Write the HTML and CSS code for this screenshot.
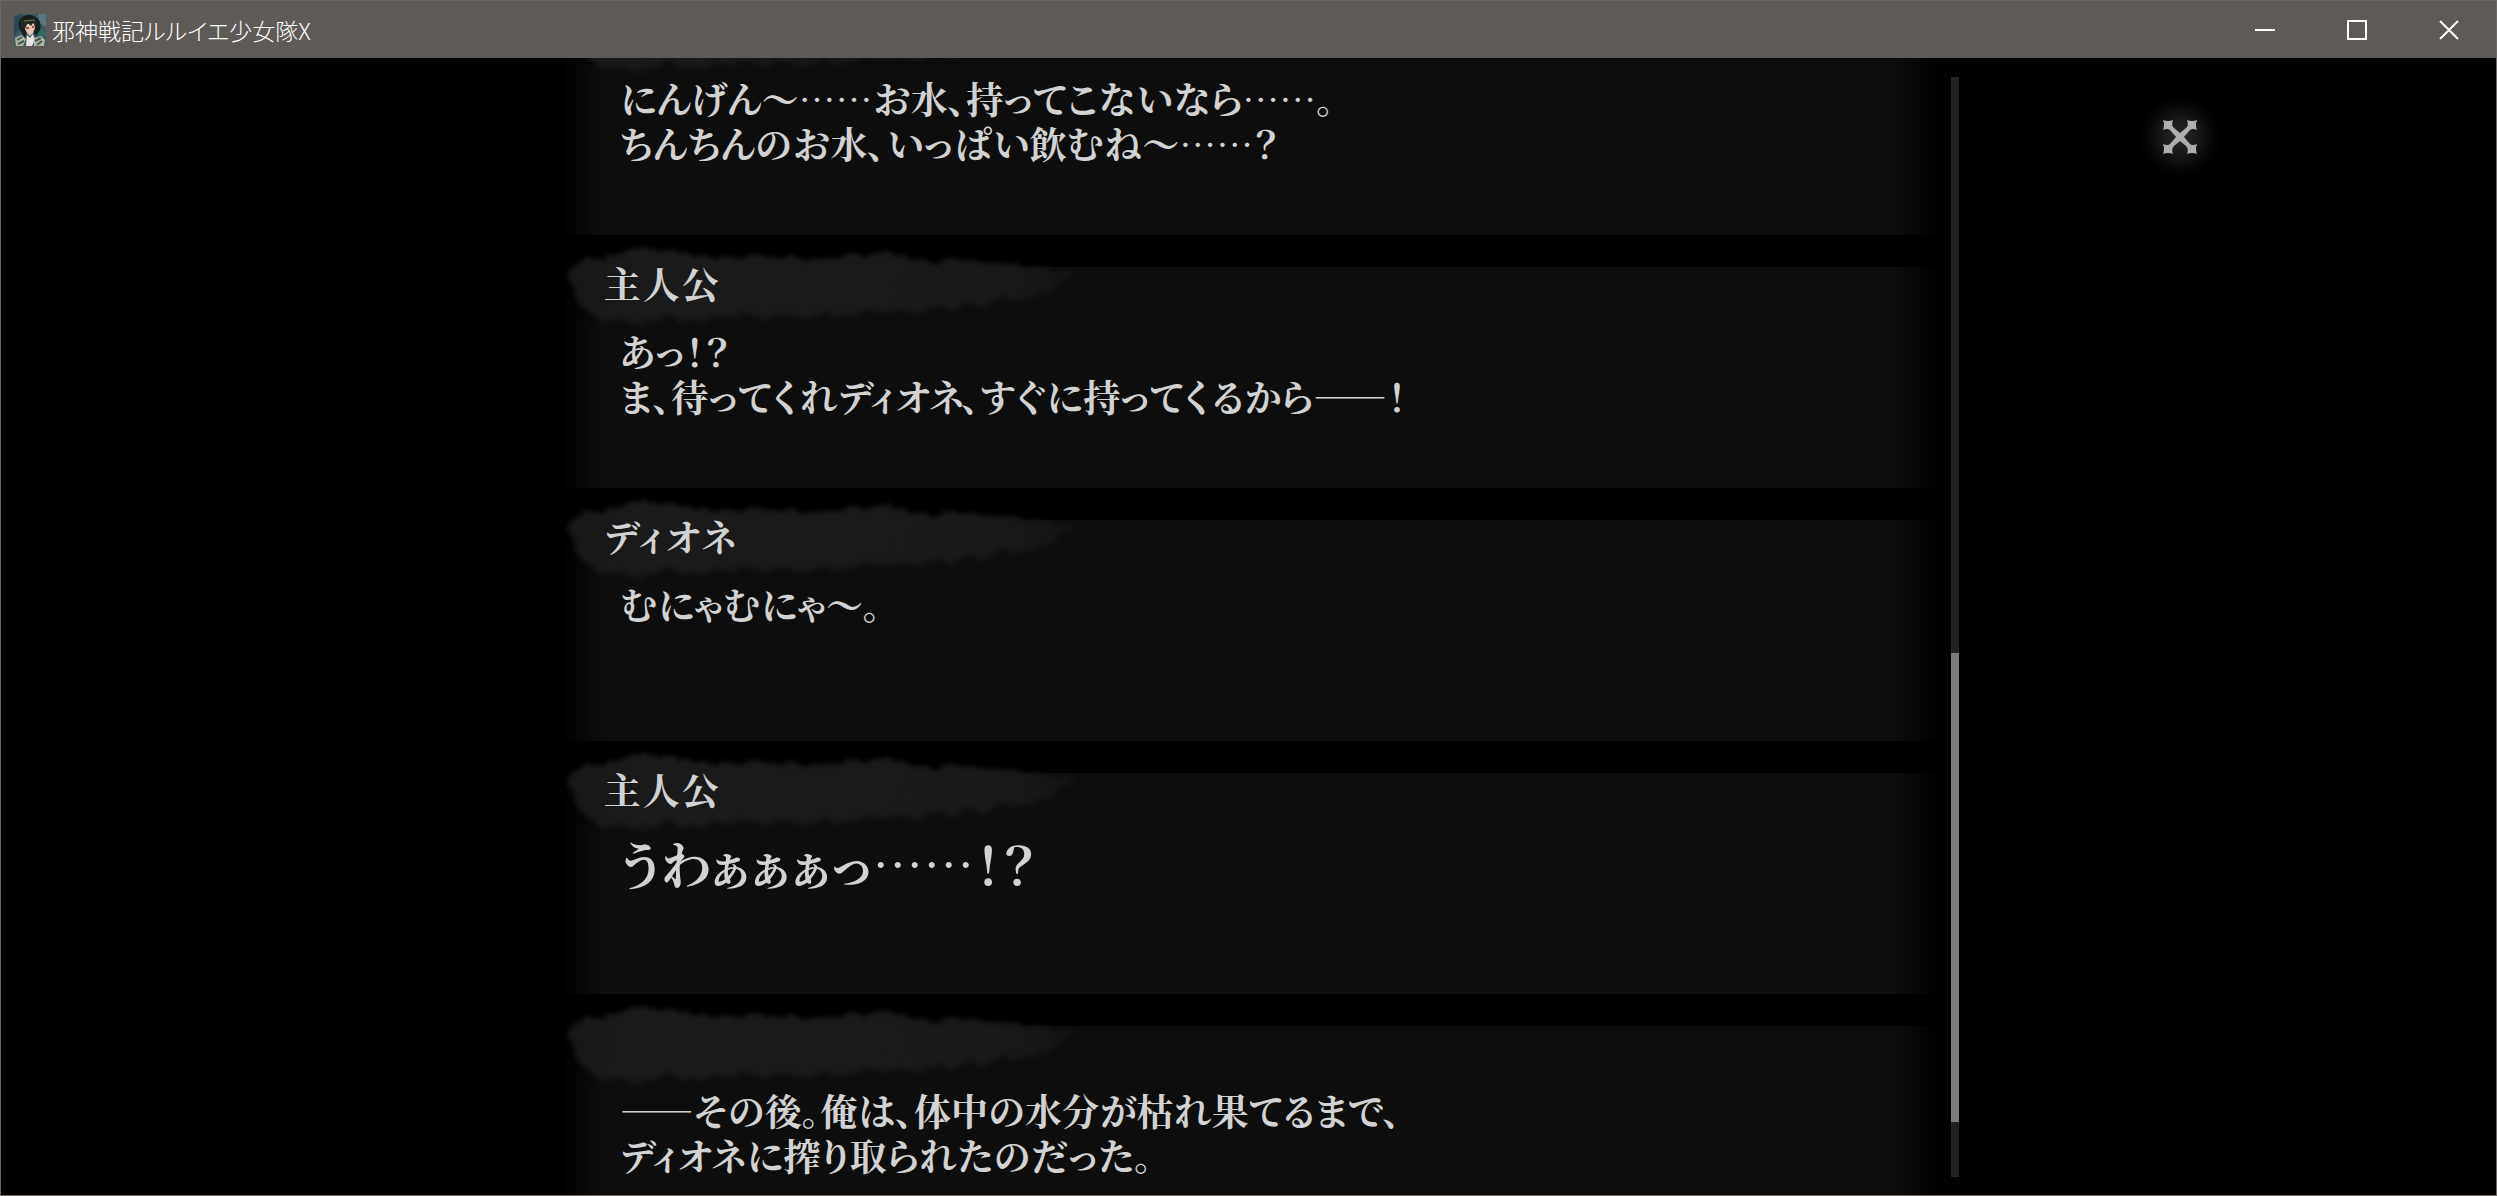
FILE: index.html
```html
<!DOCTYPE html>
<html lang="ja">
<head>
<meta charset="utf-8">
<title>邪神戦記ルルイエ少女隊X</title>
<link rel="stylesheet" href="styles.css">
</head>
<body>
<svg class="defs" aria-hidden="true">
  <filter id="rough" x="-10%" y="-30%" width="120%" height="160%" color-interpolation-filters="sRGB">
    <feTurbulence type="fractalNoise" baseFrequency="0.06 0.05" numOctaves="5" seed="11"/>
    <feDisplacementMap in="SourceGraphic" scale="18" xChannelSelector="R" yChannelSelector="G"/>
    <feGaussianBlur stdDeviation="2.5"/>
  </filter>
  <linearGradient id="ink" x1="0" x2="1" y1="0" y2="0">
    <stop offset="0" stop-color="#171717"/>
    <stop offset="0.15" stop-color="#1a1a1a"/>
    <stop offset="0.85" stop-color="#181818"/>
    <stop offset="1" stop-color="#131313"/>
  </linearGradient>
  <symbol id="brush" viewBox="0 0 530 96">
    <path filter="url(#rough)" fill="url(#ink)" d="M11 32 L26 18 L52 14 L85 8 L120 13 L160 15 L210 16 L260 17 L300 15 L322 8 L350 18 L400 19 L450 23 L480 26 L518 29 L500 42 L476 56 L430 62 L380 68 L320 73 L270 75 L200 76 L120 78 L70 80 L38 78 L22 66 L13 50Z"/>
  </symbol>
</svg>
<div class="window">
  <header class="titlebar">
    <svg class="app-icon" viewBox="0 0 32 32" aria-hidden="true">
      <rect width="32" height="32" rx="2" fill="#3d5964"/>
      <path d="M0 3 9 0 7 14 0 22Z" fill="#294754"/>
      <path d="M24 0h8v13l-7-4z" fill="#587582"/>
      <path d="M6 16C2 5 9 1 15 1s14 5 11 15l-4 6-3-5-6 1-2 6z" fill="#17201d"/>
      <path d="M12 10 20 9l1 5-2 5-3 3-3-3-2-4z" fill="#e3c3b4"/>
      <path d="M7 5h14l3 7-5-3-2 3-3-3-3 5-4 1z" fill="#202a22"/>
      <path d="M10 7 21 6" stroke="#6d7441" stroke-width="1"/>
      <path d="M12 14h3M18 13h2" stroke="#b44a36" stroke-width="2"/>
      <path d="M13 21 16 24 19 20 21 26 18 32h-6z" fill="#e6e3df"/>
      <path d="M1 24 7 21 12 25 9 32H2zM20 24l7-2 4 4-1 6H20z" fill="#a9b6a4"/>
      <path d="M3 26 8 23M4 30l6-3M21 27l6-3M23 31l5-4" stroke="#48574a" stroke-width="2"/>
      <path d="M25 20 30 17M28 21l3-1" stroke="#2b7555" stroke-width="2"/>
    </svg>
    <h1 class="title">邪神戦記ルルイエ少女隊X</h1>
    <div class="controls">
      <button class="control" type="button" aria-label="最小化"><svg viewBox="0 0 20 20"><path d="M0 10H20"/></svg></button>
      <button class="control" type="button" aria-label="最大化"><svg viewBox="0 0 20 20"><path d="M1 1H19V19H1Z"/></svg></button>
      <button class="control" type="button" aria-label="閉じる"><svg viewBox="0 0 20 20"><path d="M1 1 19 19M19 1 1 19"/></svg></button>
    </div>
  </header>
  <main class="stage">
    <div class="log">
      <article class="entry">
        <svg class="brush" aria-hidden="true"><use href="#brush"/></svg>
        <h2 class="speaker"></h2>
        <p class="line">にんげん～……お水、持ってこないなら……。<br>ちんちんのお水、いっぱい飲むね～……？</p>
      </article>
      <article class="entry">
        <svg class="brush" aria-hidden="true"><use href="#brush"/></svg>
        <h2 class="speaker">主人公</h2>
        <p class="line">あっ！？<br>ま、待ってくれディオネ、すぐに持ってくるから――！</p>
      </article>
      <article class="entry">
        <svg class="brush" aria-hidden="true"><use href="#brush"/></svg>
        <h2 class="speaker">ディオネ</h2>
        <p class="line">むにゃむにゃ～。</p>
      </article>
      <article class="entry">
        <svg class="brush" aria-hidden="true"><use href="#brush"/></svg>
        <h2 class="speaker">主人公</h2>
        <p class="line shout">うわぁぁぁっ……！？</p>
      </article>
      <article class="entry">
        <svg class="brush" aria-hidden="true"><use href="#brush"/></svg>
        <h2 class="speaker"></h2>
        <p class="line">――その後。俺は、体中の水分が枯れ果てるまで、<br>ディオネに搾り取られたのだった。</p>
      </article>
    </div>
    <div class="track"><div class="thumb"></div></div>
    <aside class="side">
      <button class="close" type="button" aria-label="ログを閉じる">
        <svg viewBox="0 0 34 34"><path d="M0 0Q5 2 10 0Q8 5 11 8L17 13L23 8Q26 5 24 0Q29 2 34 0Q32 5 34 10Q29 8 27 10L21 17L27 24Q29 26 34 24Q32 29 34 34Q29 32 24 34Q26 29 23 26L17 21L11 26Q8 29 10 34Q5 32 0 34Q2 29 0 24Q5 26 7 24L13 17L7 10Q5 8 0 10Q2 5 0 0Z"/></svg>
      </button>
    </aside>
  </main>
</div>
</body>
</html>
```
FILE: styles.css
```css
* { box-sizing: border-box; }

body {
  margin: 0;
  background: #000;
  color: #d2d2d2;
  font-family: "Noto Serif CJK JP", "Noto Sans CJK JP", serif;
}

.defs { position: absolute; width: 0; height: 0; }

.window {
  display: flex;
  flex-direction: column;
  height: 100vh;
  border: 1px solid #6b6865;
  border-top: 0;
}

.titlebar {
  display: flex;
  flex: none;
  align-items: center;
  height: 58px;
  padding: 0 1px 0 13px;
  border-top: 1px solid #6b6865;
  background: #5d5a57;
  color: #fff;
}

.app-icon { width: 32px; height: 32px; }

.title {
  margin: 0 auto 0 6px;
  font: 300 23px/32px "Noto Sans CJK JP", sans-serif;
  font-feature-settings: "palt";
}

.controls { display: flex; align-self: stretch; }

.control {
  display: grid;
  place-items: center;
  width: 92px;
  padding: 0;
  border: 0;
  background: none;
}

.control svg {
  width: 20px;
  height: 20px;
  fill: none;
  stroke: #fff;
  stroke-width: 2;
}

.stage {
  display: grid;
  flex: 1;
  grid-template-columns: 559fr 1380fr 20px 537fr;
  min-height: 0;
  overflow: hidden;
}

.log {
  display: flex;
  grid-column: 2;
  flex-direction: column;
  gap: 32px;
  height: 0;
  margin-top: -44px;
}

.entry {
  position: relative;
  flex: none;
  height: 221px;
  padding-left: 44px;
  background: linear-gradient(90deg, transparent, #0d0d0d 44px, #0d0d0d calc(100% - 44px), transparent);
}

/* ink stroke behind the speaker's name, spilling over the top edge */
.brush {
  position: absolute;
  top: -26px;
  left: 0;
  width: 530px;
  height: 96px;
  overflow: visible;
}

.speaker {
  position: relative;
  height: 62px;
  margin: -6px 0 0;
  font-size: 37px;
  font-weight: 700;
  line-height: 44px;
  letter-spacing: 2px;
  font-feature-settings: "palt";
}

.line {
  position: relative;
  margin: 0;
  padding: 6px 0 0 16px;
  font-size: 37px;
  font-weight: 700;
  line-height: 45px;
  white-space: nowrap;
  font-feature-settings: "palt";
}

.shout { font-size: 51px; line-height: 57px; }

.track {
  display: flex;
  flex-direction: column;
  justify-self: end;
  width: 8px;
  margin: 19px 0 18px;
  background: #222;
}

/* space above and below the thumb in the proportion already read */
.track::before { flex: 576; content: ""; }
.track::after { flex: 55; content: ""; }

.thumb {
  flex: 469;
  background: #7c7d7e;
}

.side { padding: 37px 0 0 179px; }

.close {
  display: grid;
  place-items: center;
  width: 84px;
  height: 84px;
  padding: 0;
  border: 0;
  background: radial-gradient(closest-side, #2a2a2a, #141414 50%, #050505 80%, transparent);
}

.close svg { width: 34px; height: 34px; fill: #adadad; }
```
